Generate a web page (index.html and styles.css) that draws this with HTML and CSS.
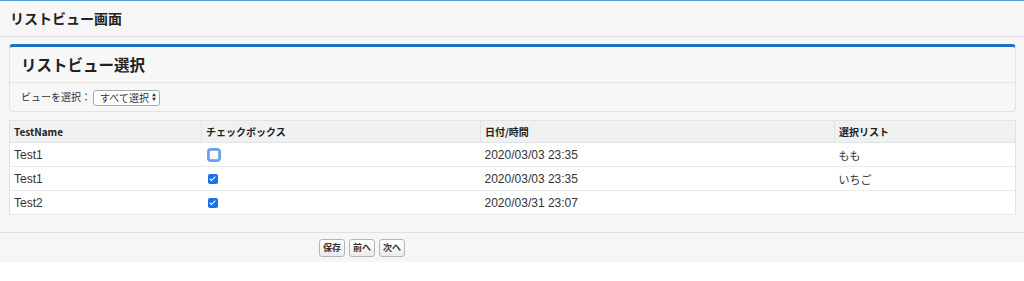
FILE: index.html
```html
<!DOCTYPE html>
<html lang="ja">
<head>
    <meta charset="utf-8">
    <title>リストビュー画面</title>
    <link rel="stylesheet" href="styles.css">
</head>
<body>

    <div class="page-header">リストビュー画面</div>

    <div class="content">
        <div class="panel">
            <div class="panel-title">リストビュー選択</div>
            <div class="panel-body">
                ビューを選択：<span class="select">すべて選択<span class="arrows">&#9650;<br>&#9660;</span></span>
            </div>
        </div>

        <table class="list">
            <colgroup>
                <col class="c1">
                <col class="c2">
                <col class="c3">
                <col>
            </colgroup>
            <tr>
                <th>TestName</th>
                <th>チェックボックス</th>
                <th>日付/時間</th>
                <th>選択リスト</th>
            </tr>
            <tr>
                <td>Test1</td>
                <td><span class="check focus"></span></td>
                <td>2020/03/03 23:35</td>
                <td>もも</td>
            </tr>
            <tr>
                <td>Test1</td>
                <td><span class="check on"></span></td>
                <td>2020/03/03 23:35</td>
                <td>いちご</td>
            </tr>
            <tr>
                <td>Test2</td>
                <td><span class="check on"></span></td>
                <td>2020/03/31 23:07</td>
                <td></td>
            </tr>
        </table>
    </div>

    <div class="buttons">
        <button>保存</button>
        <button>前へ</button>
        <button>次へ</button>
    </div>

</body>
</html>
```

FILE: styles.css
```css
body {
    margin: 0;
    background: #fff;
    font-family: "Liberation Sans", "Noto Sans CJK JP", sans-serif;
    color: #222;
}
.page-header {
    background: #f6f6f6;
    border-top: 1px solid #4a9ee0;
    border-bottom: 1px solid #dedede;
    height: 35px;
    line-height: 35px;
    padding-left: 10px;
    font-family: "Noto Sans CJK JP", sans-serif;
    font-weight: bold;
    font-size: 14px;
}
.content {
    background: #f6f6f6;
    padding: 7px 8px 17px 9px;
}
.panel {
    background: #f7f7f7;
    border: 1px solid #e3e3e3;
    border-top: 3px solid #1a72c6;
    border-radius: 4px;
}
.panel-title {
    height: 35px;
    line-height: 35px;
    padding-left: 11px;
    font-family: "Noto Sans CJK JP", sans-serif;
    font-weight: bold;
    font-size: 15.5px;
    border-bottom: 1px solid #e3e3e3;
}
.panel-body {
    height: 28px;
    line-height: 28px;
    padding-left: 11px;
    font-family: "Noto Sans CJK JP", sans-serif;
    font-size: 10px;
    color: #333;
}
.select {
    display: inline-block;
    height: 14px;
    line-height: 14px;
    margin-left: 2px;
    padding: 0 3px 0 6px;
    border: 1px solid #a9a9a9;
    border-radius: 3px;
    background: #fff;
    font-size: 10px;
    vertical-align: middle;
}
.arrows {
    display: inline-block;
    font-size: 4px;
    line-height: 4px;
    margin-left: 3px;
    vertical-align: 1px;
}
.list {
    margin-top: 8px;
    width: 100%;
    table-layout: fixed;
    border-collapse: collapse;
    background: #fff;
    border: 1px solid #e0e3e5;
    font-size: 12px;
}
.c1 { width: 192px; }
.c2 { width: 279px; }
.c3 { width: 354px; }
.list th {
    background: #f0f1f1;
    font-family: "Noto Sans CJK JP", sans-serif;
    font-size: 10px;
    text-align: left;
    height: 21px;
    padding: 0 0 0 4px;
    border-right: 1px solid #e0e3e5;
    border-bottom: 1px solid #e0e3e5;
}
.list td {
    height: 23px;
    padding: 0 0 0 4px;
    border-bottom: 1px solid #e8eaeb;
    color: #333;
}
.list td:nth-child(4) {
    font-family: "Noto Sans CJK JP", sans-serif;
    font-size: 11px;
}
.check {
    display: inline-block;
    width: 10px;
    height: 10px;
    border-radius: 2px;
    margin-left: 2px;
    vertical-align: middle;
    box-sizing: border-box;
}
.check.on {
    background: #1a73e8;
    position: relative;
}
.check.on::after {
    content: "";
    position: absolute;
    left: 3px;
    top: 1px;
    width: 2px;
    height: 5px;
    border: solid #fff;
    border-width: 0 1.5px 1.5px 0;
    transform: rotate(45deg);
}
.check.focus {
    background: #fff;
    border: 1px solid #8ab4f0;
    box-shadow: 0 0 0 2px #6c9ff0;
    margin-left: 3px;
}
.buttons {
    background: #f6f6f6;
    border-top: 1px solid #e0e0e0;
    height: 29px;
    padding-left: 319px;
    display: flex;
    align-items: center;
    gap: 4px;
}
.buttons button {
    font-family: "Noto Sans CJK JP", sans-serif;
    font-weight: bold;
    font-size: 9px;
    color: #333;
    height: 18px;
    padding: 0 3px;
    background: linear-gradient(#fff, #ececec);
    border: 1px solid #b5b5b5;
    border-radius: 3px;
}
```
